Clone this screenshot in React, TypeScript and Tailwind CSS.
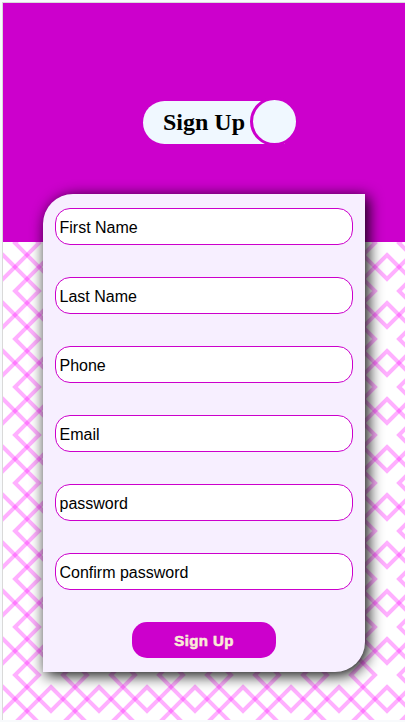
const fields = ["First Name", "Last Name", "Phone", "Email", "password", "Confirm password"];

function Lattice() {
  return (
    <svg className="absolute inset-0 h-full w-full" aria-hidden="true">
      <defs>
        <pattern id="lattice" x="24" y="25" width="48" height="48" patternUnits="userSpaceOnUse">
          {[[24, 24], [-24, 24], [72, 24], [24, -24], [24, 72]].map(([x, y]) => (
            <path
              key={`${x},${y}`}
              d={`M${x} ${y - 36} L${x + 36} ${y} L${x} ${y + 36} L${x - 36} ${y}Z`}
              fill="none"
              stroke="#ff00ff"
              strokeOpacity="0.31"
              strokeWidth="4"
            />
          ))}
        </pattern>
      </defs>
      <rect width="100%" height="100%" fill="url(#lattice)" />
    </svg>
  );
}

export default function App() {
  return (
    <div className="h-[722px] w-[405px] overflow-hidden bg-[#f8fafc] pb-[2px] pt-[2px] font-['Liberation_Sans',Arial,sans-serif]">
      <div className="relative ml-[2px] h-[718px] border-l border-t border-[#d9d9d9] bg-white">
        <div className="absolute inset-x-0 top-0 h-[239px] bg-[#cc00cc]" />
        <div className="absolute inset-x-0 bottom-0 top-[239px] overflow-hidden">
          <Lattice />
        </div>
        <div className="relative flex flex-col">
          <header className="mt-[98px] ml-[140px] flex h-[43px] w-[156px]">
            <div className="flex h-[43px] w-[142px] shrink-0 items-center rounded-l-full bg-[#f0f8ff] pl-5">
              <h1 className="font-['Liberation_Serif',serif] text-[24px] font-bold leading-[27px] text-black">
                Sign Up
              </h1>
            </div>
            <div className="-ml-[35px] -mt-1 size-[49px] shrink-0 rounded-full border-[3px] border-[#cc00cc] bg-[#f0f8ff]" />
          </header>
          <form className="mt-[50px] ml-10 flex h-[478px] w-[322px] flex-col items-center rounded-tl-[30px] rounded-br-[30px] bg-[#f7efff] pt-[14px] shadow-[3px_3px_15px_#000]">
            <div className="flex flex-col gap-8">
              {fields.map((name) => (
                <input
                  key={name}
                  type="text"
                  aria-label={name}
                  placeholder={name}
                  className="h-[37px] w-[298px] rounded-[15px] border border-[#cc00cc] bg-white pl-[3.5px] pt-[2px] text-[16px] placeholder:text-black placeholder:opacity-100"
                />
              ))}
            </div>
            <button
              type="button"
              className="mt-8 h-9 w-36 rounded-[15px] bg-[#cc00cc] pt-[2px] font-['Liberation_Sans',Arial,sans-serif] text-[15px] font-black tracking-[0.4px] text-[#faebd7] [-webkit-text-stroke:0.6px_#faebd7]"
            >
              Sign Up
            </button>
          </form>
        </div>
      </div>
    </div>
  );
}
